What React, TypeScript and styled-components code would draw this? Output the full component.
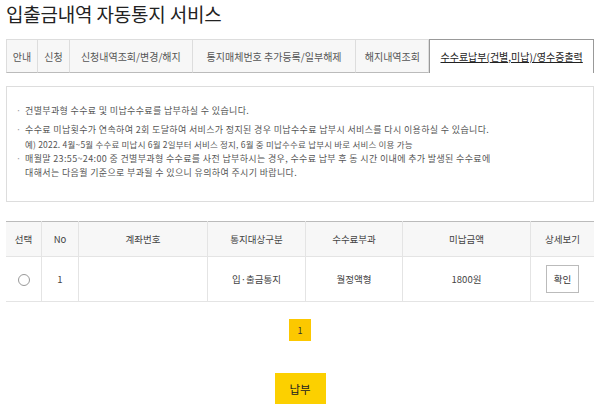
import styled, { createGlobalStyle } from "styled-components";

const GlobalStyle = createGlobalStyle`
  body {
    margin: 0;
    background: #fff;
    font-family: "Noto Sans CJK KR", "Noto Sans", sans-serif;
    color: #333;
  }
`;

const Page = styled.div`
  padding: 0 6px;
  width: 588px;
`;

const Title = styled.h1`
  margin: 0;
  padding-top: 1px;
  height: 38px;
  font-size: 19px;
  font-weight: 400;
  color: #222;
  line-height: 26px;
  letter-spacing: -0.2px;
`;

const TabBar = styled.ul`
  display: flex;
  margin: 0;
  padding: 0;
  list-style: none;
  height: 34px;
  font-size: 10px;
`;

const Tab = styled.li<{ $w: number; $active?: boolean }>`
  width: ${(p) => p.$w}px;
  box-sizing: border-box;
  display: flex;
  align-items: center;
  justify-content: center;
  background: ${(p) => (p.$active ? "#fff" : "#f7f7f7")};
  border: 1px solid ${(p) => (p.$active ? "#999" : "#ddd")};
  border-left: ${(p) => (p.$active ? "1px solid #999" : "none")};
  border-bottom: ${(p) => (p.$active ? "none" : "1px solid #bbb")};
  color: ${(p) => (p.$active ? "#222" : "#555")};
  text-decoration: ${(p) => (p.$active ? "underline" : "none")};
  white-space: nowrap;
  &:first-child {
    border-left: 1px solid #ddd;
  }
`;

const Notice = styled.ul`
  margin: 13px 0 0;
  padding: 17px 0 22px 18px;
  height: 116px;
  box-sizing: border-box;
  border: 1px solid #ddd;
  list-style: none;
  font-size: 9px;
  line-height: 14px;
  letter-spacing: 0.35px;
  color: #555;
`;

const NoticeItem = styled.li<{ $gap?: number }>`
  position: relative;
  margin-bottom: ${(p) => p.$gap ?? 0}px;
  &::before {
    content: "·";
    position: absolute;
    left: -9px;
    color: #999;
  }
`;

const Sub = styled.span`
  display: block;
  font-size: 8.5px;
  letter-spacing: 0.2px;
`;

const Table = styled.table`
  width: 100%;
  table-layout: fixed;
  margin-top: 19px;
  border-collapse: collapse;
  border-top: 1px solid #bbb;
  font-size: 9.5px;
  color: #444;
  text-align: center;
`;

const Th = styled.th<{ $w?: number }>`
  width: ${(p) => (p.$w ? `${p.$w}px` : "auto")};
  height: 34px;
  padding: 0;
  font-weight: 400;
  background: #f7f7f7;
  border-bottom: 1px solid #e4e4e4;
  border-left: 1px solid #e4e4e4;
  &:first-child {
    border-left: none;
  }
`;

const Td = styled.td`
  height: 44px;
  padding: 0;
  border-bottom: 1px solid #e4e4e4;
  border-left: 1px solid #e4e4e4;
  &:first-child {
    border-left: none;
  }
`;

const Radio = styled.span`
  display: inline-block;
  width: 10px;
  height: 10px;
  border: 1px solid #999;
  border-radius: 50%;
  vertical-align: middle;
`;

const SmallButton = styled.button`
  width: 33px;
  height: 28px;
  padding: 0;
  background: #fff;
  border: 1px solid #bbb;
  font-family: inherit;
  font-size: 9.5px;
  color: #333;
`;

const Pager = styled.div`
  display: flex;
  justify-content: center;
  margin-top: 17px;
`;

const PageNum = styled.span`
  width: 22px;
  height: 22px;
  display: flex;
  align-items: center;
  justify-content: center;
  background: #fcc800;
  font-size: 9px;
  color: #333;
`;

const Actions = styled.div`
  display: flex;
  justify-content: center;
  margin-top: 32px;
`;

const PayButton = styled.button`
  width: 51px;
  height: 31px;
  padding: 0;
  border: none;
  background: #fcd000;
  font-family: inherit;
  font-size: 11.5px;
  color: #222;
`;

const tabs = [
  { label: "안내", w: 32 },
  { label: "신청", w: 32 },
  { label: "신청내역조회/변경/해지", w: 123 },
  { label: "통지매체번호 추가등록/일부해제", w: 164 },
  { label: "해지내역조회", w: 73 },
  { label: "수수료납부(건별,미납)/영수증출력", w: 165, active: true },
];

export default function App() {
  return (
    <Page>
      <GlobalStyle />
      <Title>입출금내역 자동통지 서비스</Title>
      <TabBar>
        {tabs.map((t) => (
          <Tab key={t.label} $w={t.w} $active={t.active}>
            {t.label}
          </Tab>
        ))}
      </TabBar>
      <Notice>
        <NoticeItem $gap={5}>건별부과형 수수료 및 미납수수료를 납부하실 수 있습니다.</NoticeItem>
        <NoticeItem $gap={1}>
          수수료 미납횟수가 연속하여 2회 도달하여 서비스가 정지된 경우 미납수수료 납부시 서비스를 다시 이용하실 수 있습니다.
          <Sub>예) 2022. 4월~5월 수수료 미납시 6월 2일부터 서비스 정지, 6월 중 미납수수료 납부시 바로 서비스 이용 가능</Sub>
        </NoticeItem>
        <NoticeItem>
          매월말 23:55~24:00 중 건별부과형 수수료를 사전 납부하시는 경우, 수수료 납부 후 동 시간 이내에 추가 발생된 수수료에
          <br />
          대해서는 다음월 기준으로 부과될 수 있으니 유의하여 주시기 바랍니다.
        </NoticeItem>
      </Notice>
      <Table>
        <thead>
          <tr>
            <Th $w={35}>선택</Th>
            <Th $w={36}>No</Th>
            <Th $w={128}>계좌번호</Th>
            <Th $w={97}>통지대상구분</Th>
            <Th $w={96}>수수료부과</Th>
            <Th $w={127}>미납금액</Th>
            <Th>상세보기</Th>
          </tr>
        </thead>
        <tbody>
          <tr>
            <Td>
              <Radio />
            </Td>
            <Td>1</Td>
            <Td />
            <Td>입·출금통지</Td>
            <Td>월정액형</Td>
            <Td>1800원</Td>
            <Td>
              <SmallButton>확인</SmallButton>
            </Td>
          </tr>
        </tbody>
      </Table>
      <Pager>
        <PageNum>1</PageNum>
      </Pager>
      <Actions>
        <PayButton>납부</PayButton>
      </Actions>
    </Page>
  );
}
